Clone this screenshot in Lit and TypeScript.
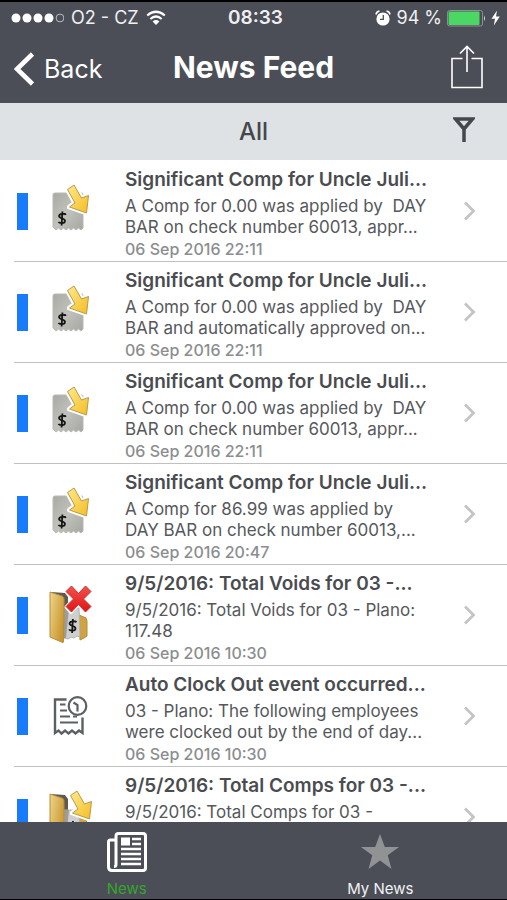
import { LitElement, html, css, svg } from "lit";
import { customElement, property } from "lit/decorators.js";

type IconName = "comp" | "voids" | "clock" | "comps";

interface NewsItem {
  icon: IconName;
  title: string;
  body: string;
  date?: string;
}

const NEWS: NewsItem[] = [
  {
    icon: "comp",
    title: "Significant Comp for Uncle Juli...",
    body: "A Comp for 0.00 was applied by  DAY\nBAR on check number 60013, appr...",
    date: "06 Sep 2016 22:11",
  },
  {
    icon: "comp",
    title: "Significant Comp for Uncle Juli...",
    body: "A Comp for 0.00 was applied by  DAY\nBAR and automatically approved on...",
    date: "06 Sep 2016 22:11",
  },
  {
    icon: "comp",
    title: "Significant Comp for Uncle Juli...",
    body: "A Comp for 0.00 was applied by  DAY\nBAR on check number 60013, appr...",
    date: "06 Sep 2016 22:11",
  },
  {
    icon: "comp",
    title: "Significant Comp for Uncle Juli...",
    body: "A Comp for 86.99 was applied by\nDAY BAR on check number 60013,...",
    date: "06 Sep 2016 20:47",
  },
  {
    icon: "voids",
    title: "9/5/2016: Total Voids for 03 -...",
    body: "9/5/2016: Total Voids for 03 - Plano:\n117.48",
    date: "06 Sep 2016 10:30",
  },
  {
    icon: "clock",
    title: "Auto Clock Out event occurred...",
    body: "03 - Plano: The following employees\nwere clocked out by the end of day...",
    date: "06 Sep 2016 10:30",
  },
  {
    icon: "comps",
    title: "9/5/2016: Total Comps for 03 -...",
    body: "9/5/2016: Total Comps for 03 -",
  },
];

const gradients = svg`
  <defs>
    <linearGradient id="paper" x1="0" y1="0" x2="1" y2="1">
      <stop offset="0" stop-color="#a9a9a3" />
      <stop offset="0.5" stop-color="#c2c2bc" />
      <stop offset="1" stop-color="#a6a6a0" />
    </linearGradient>
    <linearGradient id="gold" x1="0" y1="0" x2="1" y2="1">
      <stop offset="0" stop-color="#ffe98c" />
      <stop offset="1" stop-color="#f3bd22" />
    </linearGradient>
    <linearGradient id="flap" x1="0" y1="0" x2="1" y2="0.6">
      <stop offset="0" stop-color="#efd58a" />
      <stop offset="1" stop-color="#c8962f" />
    </linearGradient>
    <linearGradient id="red" x1="0" y1="0" x2="0" y2="1">
      <stop offset="0" stop-color="#f2524e" />
      <stop offset="1" stop-color="#e01414" />
    </linearGradient>
  </defs>`;

const dollar = svg`
  <path d="M4.8 -4.6C3.8 -6.2 -3.6 -6.6 -3.6 -3C-3.6 0.6 3.6 -0.8 3.6 3C3.6 6.6 -3.4 6.2 -4.2 4.2M0.5 -8.5L-0.5 8.5"
    fill="none" stroke="#161616" stroke-width="2.2" transform="scale(0.82)" />`;

const arrow = svg`
  <path d="M27.5 13.5L34 9L41.500 22L48.500 19.500L46.500 37L29.5 31L35 27Z" fill="#fff" stroke="#fff" stroke-width="5" stroke-linejoin="round" />
  <path d="M27.5 13.5L34 9L41.500 22L48.500 19.500L46.500 37L29.5 31L35 27Z" fill="url(#gold)" stroke="#b89a4c" stroke-width="1" stroke-linejoin="round" />`;

const folder = svg`
  <path d="M11 12L25 13L28 17V28L23 63Z" fill="#5e5a50" />
  <path d="M39 35L46 38L47 41V56L44 58L40 60Z" fill="#cda344" stroke="#b68c34" stroke-width="1" />
  <path d="M24 28H39L40 57L37 56L34 58L31 57L28 59L24 58Z" fill="#cfcfce" stroke="#b3b3b0" stroke-width="1" />
  <path d="M24 28H29L26 58H24Z" fill="#9d9c98" />
  <path d="M10 12L22 16Q24 17 24 19V40L23.500 62Q23 63 21.500 62L10 57Z" fill="url(#flap)" stroke="#b88d38" stroke-width="1" />
  <g transform="translate(32.500 46)">${dollar}</g>`;

const ICONS = {
  comp: svg`
    <path d="M15 17H42Q43 17 43 19V52L41 54L38.500 52L36 54L33.500 52L31 54L28.500 52L26 54L23.500 52L21 54L18.500 52L16 54L13 51V19Q13 17 15 17Z"
      fill="url(#paper)" stroke="#b9b9b4" stroke-width="1" />
    <g transform="translate(22 42.500)">${dollar}</g>
    ${arrow}`,
  voids: svg`
    ${folder}
    <path d="M26.500 11L31 6.500L38.500 14L46 6.500L50.500 11L43 19L50.500 27L46 32L38.500 24L31 32L26.500 27L34 19Z"
      fill="#fff" stroke="#fff" stroke-width="4" stroke-linejoin="round" />
    <path d="M26 11.500L31.500 6L38.500 13.500L45.500 6L51 11.500L43.500 19L51 26.500L45.500 32L38.500 24.500L31.500 32L26 26.500L33.500 19Z"
      fill="url(#red)" stroke="#c93030" stroke-width="1" stroke-linejoin="round" />`,
  clock: svg`
    <g fill="none" stroke="#5c5f63" stroke-width="2.400">
      <path d="M26.500 18.500H15V52L18.500 49.500L21.500 52.500L25 49.500L28.500 52.500L32 49.500L35.500 52.500L39 49.500L42.500 52V36.500" />
      <circle cx="37.500" cy="25" r="8.800" stroke-width="2.200" />
      <path d="M33.500 21.500L37.500 24V30.500" stroke-width="2.200" />
      <path d="M20 23.500H25.500M20 29.500H27M20 35.500H30M33 35.500H37M20 41.500H38" stroke-width="2" />
    </g>`,
  comps: svg`${folder}<g transform="translate(3 0)">${arrow}</g>`,
};

@customElement("news-row")
export class NewsRow extends LitElement {
  @property({ attribute: false }) item!: NewsItem;

  static styles = css`
    :host {
      display: block;
    }
    .row {
      display: flex;
      align-items: center;
      box-sizing: border-box;
      margin-left: 14px;
      padding: 7px 31px 0 3px;
      border-bottom: 1px solid #bfc0c2;
      color: #56585c;
      text-decoration: none;
    }
    .marker {
      flex: none;
      width: 11px;
      height: 37px;
      margin: 0 12px 7px 0;
      background: #187bfb;
    }
    .icon {
      flex: none;
      width: 60px;
      height: 70px;
      margin: 0 25px 7px 0;
    }
    .text {
      flex: 1;
      min-width: 0;
      overflow: hidden;
    }
    .title {
      margin: 0 0 4px;
      font-size: 19px;
      line-height: 24px;
      font-weight: 600;
      color: #4a4c50;
      white-space: pre;
    }
    .body {
      margin: 0;
      min-height: 42px;
      font-size: 17px;
      line-height: 21px;
      white-space: pre;
    }
    .date {
      display: block;
      min-height: 23px;
      font-size: 16px;
      line-height: 23px;
      font-weight: 500;
      color: #8c8d90;
    }
    .chevron {
      flex: none;
      width: 13px;
      height: 20px;
      margin-bottom: 7px;
    }
  `;

  render() {
    const { icon, title, body, date } = this.item;
    return html`
      <a class="row" href="#detail">
        <span class="marker"></span>
        <svg class="icon" viewBox="0 0 60 70" aria-hidden="true">${gradients}${ICONS[icon]}</svg>
        <div class="text">
          <h2 class="title">${title}</h2>
          <p class="body">${body}</p>
          <time class="date">${date}</time>
        </div>
        <svg class="chevron" viewBox="0 0 13 20" aria-hidden="true">
          <path d="M2 1.500L10.500 10L2 18.500" fill="none" stroke="#c4c4c6" stroke-width="2.800" />
        </svg>
      </a>
    `;
  }
}

@customElement("app-root")
export class AppRoot extends LitElement {
  static styles = css`
    :host {
      display: flex;
      flex-direction: column;
      box-sizing: border-box;
      height: 100vh;
      border-top: 2px solid #000;
      border-bottom: 1px solid #000;
      background: #fff;
      font-family: Inter, "Liberation Sans", sans-serif;
    }
    button {
      padding: 0;
      border: 0;
      background: none;
      color: inherit;
      font: inherit;
      cursor: pointer;
    }
    svg {
      display: block;
      flex: none;
    }
    .header {
      flex: none;
      background: #4b4e56;
      color: #fff;
    }
    .status {
      display: grid;
      grid-template-columns: 1fr auto 1fr;
      align-items: center;
      height: 32px;
      padding: 0 7px 0 11px;
      font-size: 18px;
      line-height: 24px;
      color: #f0f0f2;
    }
    .carrier,
    .power {
      display: flex;
      align-items: center;
      white-space: nowrap;
    }
    .carrier {
      gap: 7px;
    }
    .power {
      justify-content: flex-end;
      gap: 5px;
    }
    .time {
      font-size: 19px;
      font-weight: 600;
    }
    .nav {
      display: grid;
      grid-template-columns: 1fr auto 1fr;
      align-items: center;
      height: 69px;
      padding: 0 14px;
    }
    .back {
      display: flex;
      align-items: center;
      justify-self: start;
      gap: 9px;
      font-size: 25px;
      line-height: 32px;
    }
    .heading {
      margin: 0;
      padding-bottom: 4px;
      font-size: 30px;
      line-height: 36px;
      font-weight: 700;
    }
    .share {
      justify-self: end;
      padding: 0 10px 4px 0;
    }
    .filter {
      flex: none;
      display: grid;
      grid-template-columns: 1fr auto 1fr;
      align-items: center;
      height: 57px;
      padding: 0 32px;
      box-sizing: border-box;
      background: #dee2e5;
      color: #44474c;
      font-size: 24px;
      line-height: 30px;
      font-weight: 500;
    }
    .scope {
      grid-column: 2;
    }
    .funnel {
      justify-self: end;
    }
    .list {
      flex: 1;
      min-height: 0;
      margin: 0;
      padding: 1px 0 0;
      list-style: none;
      overflow-y: auto;
      scrollbar-width: none;
    }
    .tabs {
      flex: none;
      display: flex;
      height: 77px;
      background: #4b4e56;
      color: #f2f2f4;
    }
    .tab {
      flex: 1;
      display: flex;
      flex-direction: column;
      align-items: center;
      gap: 8px;
      padding-top: 10px;
      color: inherit;
      font-size: 15px;
      line-height: 18px;
      text-decoration: none;
    }
    .current {
      color: #35a52c;
    }
  `;

  render() {
    return html`
      <header class="header">
        <div class="status">
          <div class="carrier">
            <svg width="53" height="10" viewBox="0 0 53 10" aria-hidden="true">
              <g fill="#fff">
                <circle cx="5" cy="5" r="4.500" />
                <circle cx="16" cy="5" r="4.500" />
                <circle cx="27" cy="5" r="4.500" />
                <circle cx="38" cy="5" r="4.500" />
              </g>
              <circle cx="49" cy="5" r="3.900" fill="none" stroke="#b9bbc0" stroke-width="1" />
            </svg>
            <span>O2 - CZ</span>
            <svg width="20" height="16" viewBox="0 0 20 16" aria-hidden="true">
              <path d="M1.200 5.500Q10 -2 18.800 5.500M4.300 9Q10 4 15.700 9" fill="none" stroke="#fff" stroke-width="2.200" />
              <path d="M6.600 11.500Q10 8.600 13.400 11.500L10 15Z" fill="#fff" />
            </svg>
          </div>
          <span class="time">08:33</span>
          <div class="power">
            <svg width="16" height="16" viewBox="0 0 16 16" aria-hidden="true">
              <circle cx="8" cy="9" r="6.600" fill="#fff" />
              <path d="M1 4.500Q1.500 1.500 4.500 1M11.500 1Q14.500 1.500 15 4.500" fill="none" stroke="#fff" stroke-width="1.600" />
              <path d="M8.300 5V9.300H5" fill="none" stroke="#4b4e56" stroke-width="1.300" />
            </svg>
            <span>94 %</span>
            <svg width="39" height="17" viewBox="0 0 39 17" aria-hidden="true">
              <rect x="0.500" y="0.500" width="35" height="15.500" rx="2" fill="none" stroke="#8b8e94" />
              <rect x="1.500" y="1.500" width="31" height="13.500" rx="1" fill="#4bd763" />
              <path d="M37 5.500Q39 8.250 37 11Z" fill="#d5d6d9" />
            </svg>
            <svg width="9" height="16" viewBox="0 0 9 16" aria-hidden="true">
              <path d="M6 0.500L0.500 8.800H4L2.800 15.500L8.800 6.600H5Z" fill="#fff" />
            </svg>
          </div>
        </div>
        <nav class="nav">
          <button class="back" type="button">
            <svg width="21" height="34" viewBox="0 0 21 34" aria-hidden="true">
              <path d="M18.500 2L3 17L18.500 32" fill="none" stroke="#fff" stroke-width="4.600" />
            </svg>
            <span>Back</span>
          </button>
          <h1 class="heading">News Feed</h1>
          <button class="share" type="button" aria-label="Share">
            <svg width="32" height="44" viewBox="0 0 32 44">
              <path d="M11.500 13.500H1V42.500H31V13.500H20.500M16 27V2M9 8.500L16 1.500L23 8.500" fill="none" stroke="#fff" stroke-width="1.600" />
            </svg>
          </button>
        </nav>
      </header>
      <div class="filter">
        <span class="scope">All</span>
        <button class="funnel" type="button" aria-label="Filter">
          <svg width="22" height="30" viewBox="0 0 22 30">
            <path d="M2.500 2H19.500L11 12ZM11 11V25" fill="none" stroke="#44474c" stroke-width="3.500" />
          </svg>
        </button>
      </div>
      <ul class="list">
        ${NEWS.map((item) => html`<li><news-row .item=${item}></news-row></li>`)}
      </ul>
      <nav class="tabs">
        <a class="tab current" href="#news">
          <svg width="40" height="40" viewBox="0 0 40 40" aria-hidden="true">
            <path d="M9 8H3.500Q1.500 8 1.500 10V35Q1.500 38.500 5 38.500H36Q38.500 38.500 38.500 36V4Q38.500 1.500 36 1.500H11.500Q9 1.500 9 4V32.500Q9 34.500 7 34.500" fill="none" stroke="#fff" stroke-width="3" />
            <rect x="14" y="5.500" width="9" height="8" fill="#fff" />
            <path d="M25 7H34M25 12H34M14 17H34M14 22H34M14 27H34M14 32H34" stroke="#fff" stroke-width="2.400" />
          </svg>
          News
        </a>
        <a class="tab" href="#my-news">
          <svg width="40" height="40" viewBox="0 0 40 40" aria-hidden="true">
            <path d="M20 2L24.800 15H39L27.700 23.200L31.500 37L20 28.600L8.500 37L12.300 23.200L1 15H15.200Z" fill="#919294" />
          </svg>
          My News
        </a>
      </nav>
    `;
  }
}
